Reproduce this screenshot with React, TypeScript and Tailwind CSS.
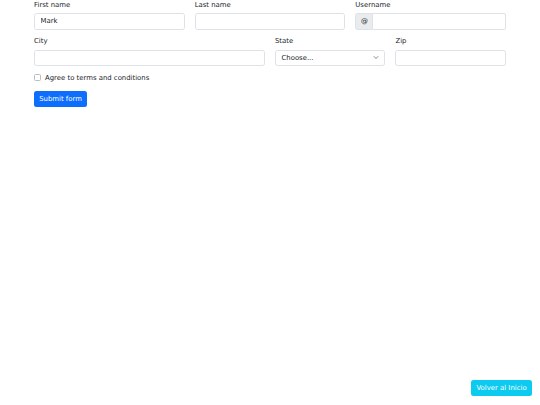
import React from "react";

const font = { fontFamily: '"DejaVu Sans", sans-serif' };

const Label: React.FC<{ children: React.ReactNode }> = ({ children }) => (
  <label className="block h-[10px] mb-[3.3px] text-[6.9px] leading-[10px] text-[#212529]">{children}</label>
);

const inputCls =
  "block w-full h-[16.4px] px-[5.5px] text-[6.9px] text-[#212529] bg-white border border-[#dee2e6] rounded-[2.5px] outline-none";

const App: React.FC = () => {
  return (
    <div className="h-screen bg-white flex flex-col overflow-hidden" style={font}>
      <form className="ml-[34px] w-[472px] grid grid-cols-12 gap-x-[10px] gap-y-[6.7px]">
        {/* Row 1 */}
        <div className="col-span-4">
          <Label>First name</Label>
          <input className={inputCls} defaultValue="Mark" />
        </div>
        <div className="col-span-4">
          <Label>Last name</Label>
          <input className={inputCls} />
        </div>
        <div className="col-span-4">
          <Label>Username</Label>
          <div className="flex h-[16.4px]">
            <span className="w-[18px] flex items-center justify-center bg-[#e9ecef] border border-[#dee2e6] rounded-l-[2.5px] text-[6.9px] text-[#212529]">
              @
            </span>
            <input className="flex-1 min-w-0 h-[16.4px] px-[5.5px] text-[6.9px] border border-l-0 border-[#dee2e6] rounded-r-[2.5px] outline-none" />
          </div>
        </div>

        {/* Row 2 */}
        <div className="col-span-6">
          <Label>City</Label>
          <input className={inputCls} />
        </div>
        <div className="col-span-3">
          <Label>State</Label>
          <div className="h-[16.4px] flex items-center justify-between pl-[5.5px] pr-[5px] border border-[#dee2e6] rounded-[2.5px] text-[6.9px] text-[#212529]">
            <span>Choose...</span>
            <svg width="6" height="5" viewBox="0 0 16 16" fill="none" stroke="#343a40" strokeWidth="2" strokeLinecap="round" strokeLinejoin="round">
              <path d="M2 5l6 6 6-6" />
            </svg>
          </div>
        </div>
        <div className="col-span-3">
          <Label>Zip</Label>
          <input className={inputCls} />
        </div>

        {/* Checkbox */}
        <div className="col-span-12 flex items-center gap-[4px] h-[10px]">
          <span className="w-[7px] h-[7px] border border-[#b8bdc2] rounded-[1.5px] bg-white" />
          <span className="text-[6.9px] leading-[10px] text-[#212529]">Agree to terms and conditions</span>
        </div>

        <div className="col-span-12 pt-[1.3px]">
          <button
            type="button"
            className="h-[16.4px] w-[53px] bg-[#0d6efd] text-white text-[6.9px] rounded-[2.5px] flex items-center justify-center"
          >
            Submit form
          </button>
        </div>
      </form>

      <div className="mt-auto self-end mr-[8px] mb-[9px]">
        <button
          type="button"
          className="h-[16.4px] w-[61px] bg-[#0dcaf0] text-white text-[6.9px] rounded-[2.5px] flex items-center justify-center"
        >
          Volver al Inicio
        </button>
      </div>
    </div>
  );
};

export default App;
